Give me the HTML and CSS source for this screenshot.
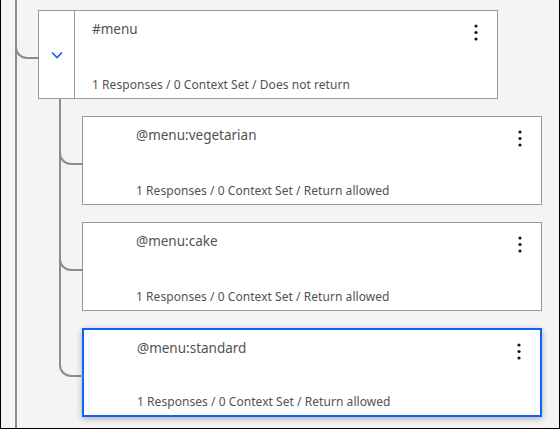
FILE: index.html
```html
<!DOCTYPE html>
<html lang="en">
<head>
<meta charset="utf-8">
<title>Dialog tree</title>
<link rel="stylesheet" href="styles.css">
</head>
<body>
<div class="frame">
  <div class="tree">
    <div class="card node">
      <div class="toggle">
        <svg class="chevron" width="12" height="8" viewBox="0 0 12 8" aria-hidden="true"><path d="M1 1.5 L6 6.5 L11 1.5" fill="none" stroke="#0f62fe" stroke-width="1.7"/></svg>
      </div>
      <div class="body">
        <div class="title">#menu</div>
        <div class="meta">1 Responses / 0 Context Set / Does not return</div>
      </div>
      <svg class="kebab" width="4" height="17" viewBox="0 0 4 17" aria-hidden="true"><circle cx="2" cy="2" r="1.6"/><circle cx="2" cy="8.5" r="1.6"/><circle cx="2" cy="15" r="1.6"/></svg>
    </div>
    <div class="children">
      <div class="card child">
        <div class="spacer"></div>
        <div class="body">
          <div class="title">@menu:vegetarian</div>
          <div class="meta">1 Responses / 0 Context Set / Return allowed</div>
        </div>
        <svg class="kebab" width="4" height="17" viewBox="0 0 4 17" aria-hidden="true"><circle cx="2" cy="2" r="1.6"/><circle cx="2" cy="8.5" r="1.6"/><circle cx="2" cy="15" r="1.6"/></svg>
      </div>
      <div class="card child">
        <div class="spacer"></div>
        <div class="body">
          <div class="title">@menu:cake</div>
          <div class="meta">1 Responses / 0 Context Set / Return allowed</div>
        </div>
        <svg class="kebab" width="4" height="17" viewBox="0 0 4 17" aria-hidden="true"><circle cx="2" cy="2" r="1.6"/><circle cx="2" cy="8.5" r="1.6"/><circle cx="2" cy="15" r="1.6"/></svg>
      </div>
      <div class="card child selected">
        <div class="spacer"></div>
        <div class="body">
          <div class="title">@menu:standard</div>
          <div class="meta">1 Responses / 0 Context Set / Return allowed</div>
        </div>
        <svg class="kebab" width="4" height="17" viewBox="0 0 4 17" aria-hidden="true"><circle cx="2" cy="2" r="1.6"/><circle cx="2" cy="8.5" r="1.6"/><circle cx="2" cy="15" r="1.6"/></svg>
      </div>
    </div>
  </div>
</div>
</body>
</html>
```
FILE: styles.css
```css
html, body {
  margin: 0;
  padding: 0;
}
body {
  width: 560px;
  height: 429px;
  overflow: hidden;
  background: #f4f4f4;
  font-family: "Noto Sans", "Open Sans", sans-serif;
}
.frame {
  box-sizing: border-box;
  width: 560px;
  height: 429px;
  border-left: 1px solid #000;
  border-right: 1px solid #000;
  border-bottom: 1px solid #000;
  padding-left: 14px;
}
.tree {
  box-sizing: border-box;
  height: 100%;
  border-left: 2px solid #8d8d8d;
  padding-top: 10px;
  padding-left: 21px;
}
.card {
  position: relative;
  box-sizing: border-box;
  width: 460px;
  height: 89px;
  background: #fff;
  border: 1px solid #999;
  display: flex;
  flex-direction: row;
}
.card::before {
  content: "";
  position: absolute;
  box-sizing: border-box;
  left: -24px;
  top: 0;
  width: 24px;
  height: 48px;
  border-left: 2px solid #8d8d8d;
  border-bottom: 2px solid #8d8d8d;
  border-bottom-left-radius: 12px;
}
.toggle {
  flex: 0 0 36px;
  box-sizing: border-box;
  border-right: 1px solid #999;
  display: flex;
  align-items: center;
  justify-content: center;
}
.chevron {
  display: block;
  margin-left: 1px;
}
.spacer {
  flex: 0 0 36px;
}
.body {
  flex: 1 1 auto;
  display: flex;
  flex-direction: column;
  justify-content: space-between;
  padding: 9px 0 5px 17px;
  color: #525252;
}
.title {
  font-size: 13.5px;
  line-height: 18px;
}
.meta {
  font-size: 12px;
  line-height: 16px;
  letter-spacing: 0.05px;
}
.kebab {
  flex: 0 0 auto;
  fill: #161616;
  margin: 13px 19px 0 0;
}
.children {
  position: relative;
  margin-left: 21px;
  padding-top: 17px;
  display: flex;
  flex-direction: column;
  gap: 17px;
}
.children::before {
  content: "";
  position: absolute;
  left: 0;
  top: 0;
  bottom: 50px;
  width: 2px;
  background: #8d8d8d;
}
.child {
  margin-left: 23px;
}
.child.selected {
  border: 2px solid #0f62fe;
  box-shadow: 0 2px 6px rgba(0, 0, 0, 0.3);
}
.child.selected::before {
  left: -25px;
  top: -1px;
}
```
